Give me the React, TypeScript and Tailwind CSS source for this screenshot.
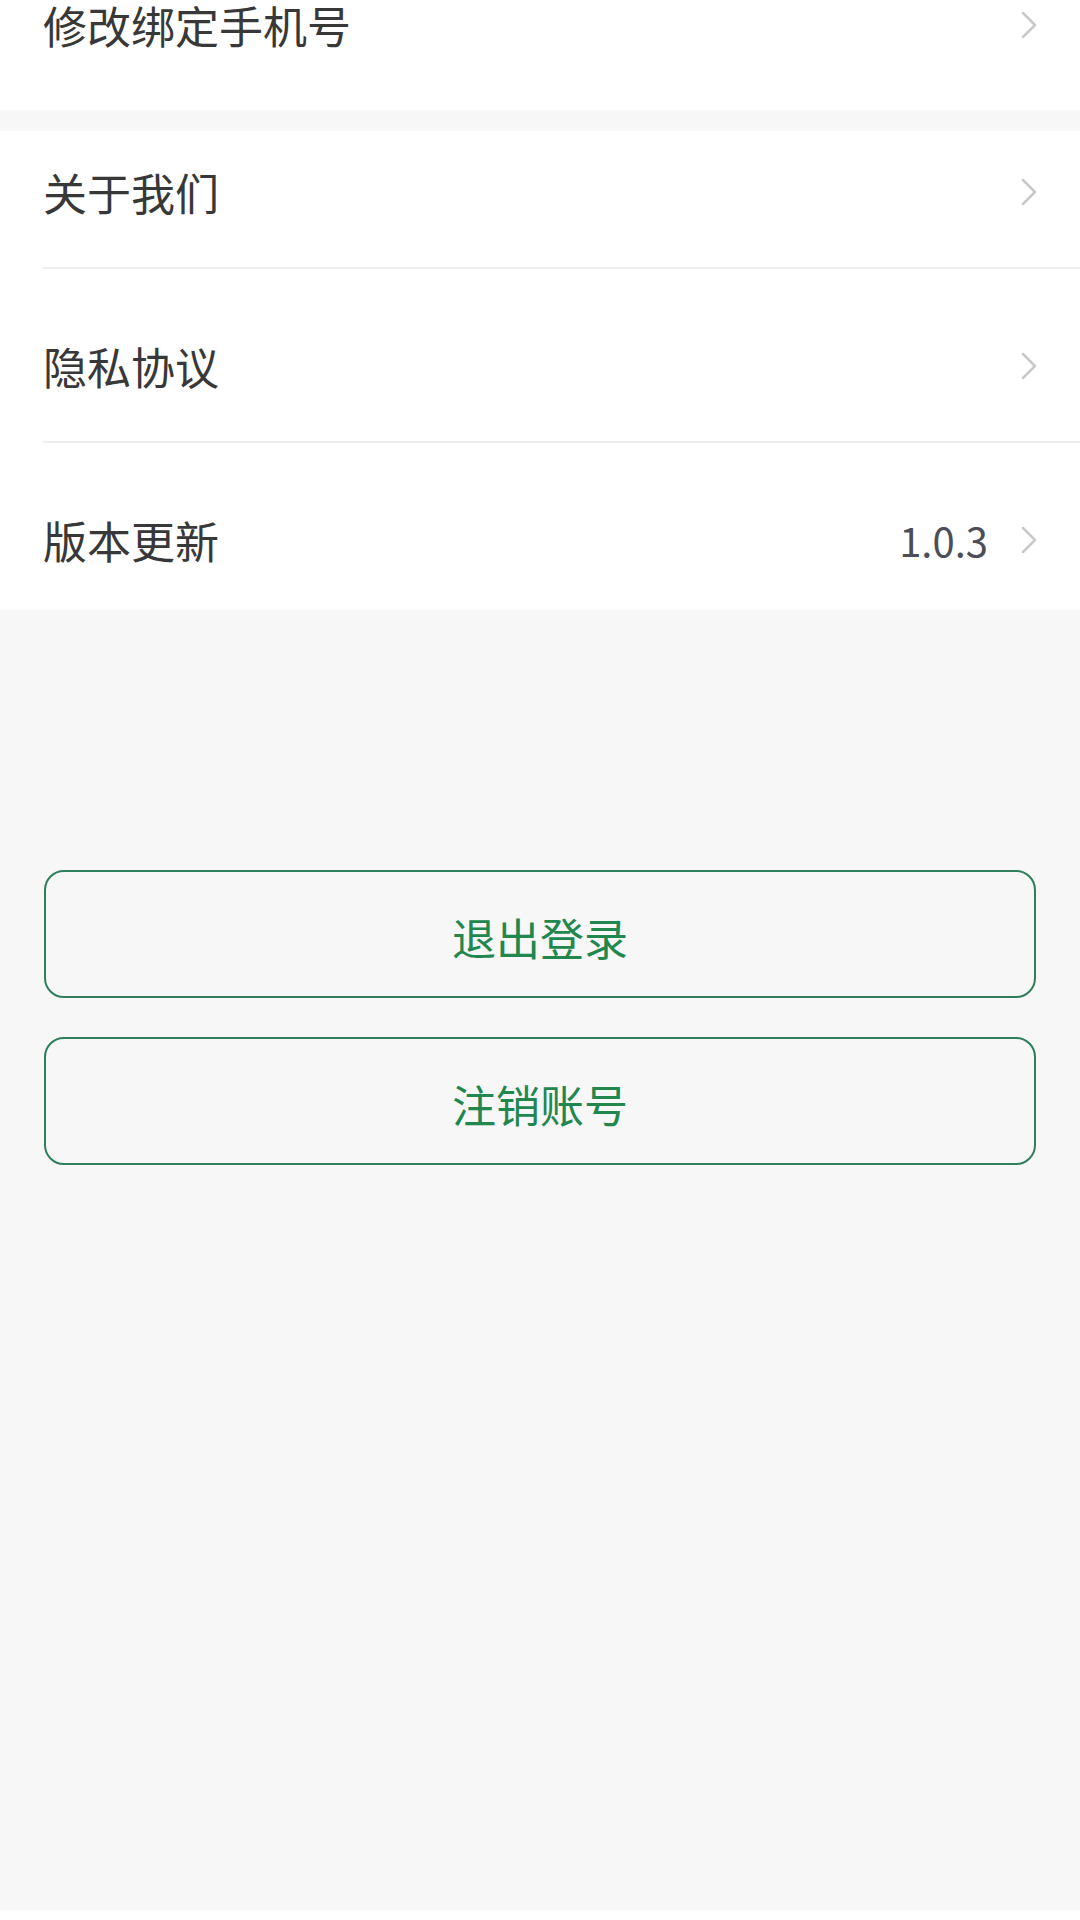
import React from 'react';

const font = { fontFamily: '"Noto Sans CJK SC", "Noto Sans", sans-serif' };

function Chevron() {
  return (
    <svg width="16" height="28" viewBox="0 0 16 28" className="shrink-0">
      <polyline points="2,2 14,14 2,26" fill="none" stroke="#c9c9c9" strokeWidth="2.5" strokeLinecap="round" strokeLinejoin="round" />
    </svg>
  );
}

function Row({ label, extra, className }: { label: string; extra?: string; className: string }) {
  return (
    <div className={className}>
      <div className="flex items-center h-[44px] pl-[43px] pr-[43px]">
        <span className="flex-1 text-[44px] leading-none text-[#383838]">{label}</span>
        {extra && <span className="mr-[33px] text-[40px] leading-none text-[#4b4e58]">{extra}</span>}
        <Chevron />
      </div>
    </div>
  );
}

function Divider() {
  return <div className="ml-[43px] h-[2px] bg-[#eeeeee]" />;
}

function OutlineButton({ label }: { label: string }) {
  return (
    <button className="flex items-center justify-center h-[128px] pt-[6px] rounded-[20px] border-2 border-[#2f7f5c] text-[44px] leading-none text-[#22874f]">
      {label}
    </button>
  );
}

export default function App() {
  return (
    <div style={font} className="w-[1080px] h-[1920px] bg-[#f7f7f7] flex flex-col">
      <div className="bg-white h-[110px]">
        <Row label="修改绑定手机号" className="pt-[3px]" />
      </div>

      <div className="mt-[21px] bg-white flex flex-col">
        <Row label="关于我们" className="h-[136px] pt-[39px]" />
        <Divider />
        <Row label="隐私协议" className="h-[172px] pt-[75px]" />
        <Divider />
        <Row label="版本更新" extra="1.0.3" className="h-[167px] pt-[75px]" />
      </div>

      <div className="mt-[260px] px-[44px] flex flex-col gap-[39px]">
        <OutlineButton label="退出登录" />
        <OutlineButton label="注销账号" />
      </div>

      <div className="mt-auto h-[10px] bg-white" />
    </div>
  );
}
